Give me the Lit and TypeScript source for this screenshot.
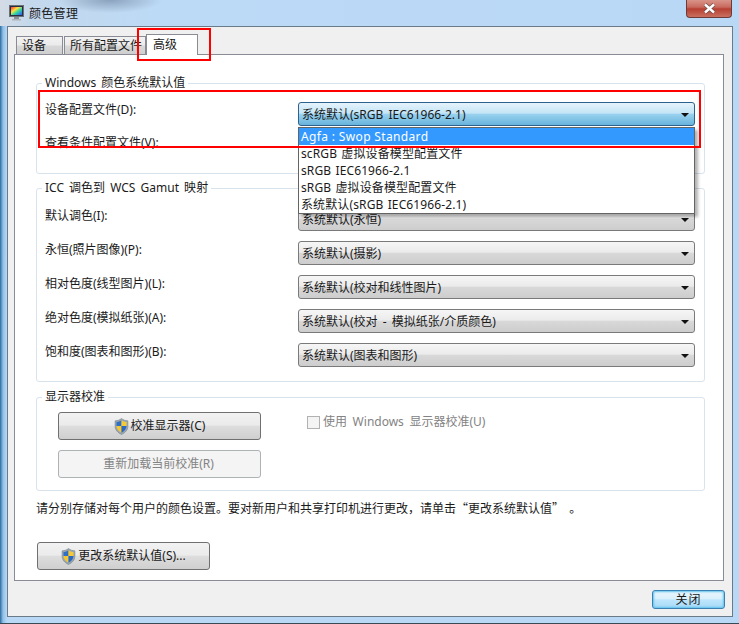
import { LitElement, html, css } from "lit";
import { customElement } from "lit/decorators.js";

const shield = html`<svg class="shield" width="15" height="17" viewBox="0 0 14 16">
  <path d="M7 .5C5.400 1.800 3.400 2.600 1 2.700v5.100c0 3.400 2.400 6 6 7.700 3.600-1.700 6-4.300 6-7.700V2.700C10.600 2.600 8.600 1.800 7 .5z" fill="#9aa6b0" stroke="#7d8791" stroke-width=".6"/>
  <path d="M7 2v5.500H2.300V3.800C4 3.700 5.600 3 7 2z" fill="#2f6fc4"/>
  <path d="M7 2v5.500h4.700V3.800C10 3.700 8.400 3 7 2z" fill="#f7c934"/>
  <path d="M7 7.500v6.400C4.500 12.600 2.500 10.600 2.300 7.500H7z" fill="#f5c730"/>
  <path d="M7 7.500v6.400c2.500-1.300 4.500-3.300 4.700-6.400H7z" fill="#2c68bd"/>
</svg>`;

const rows2 = [
  ["默认调色(I):", "系统默认(永恒)"],
  ["永恒(照片图像)(P):", "系统默认(摄影)"],
  ["相对色度(线型图片)(L):", "系统默认(校对和线性图片)"],
  ["绝对色度(模拟纸张)(A):", "系统默认(校对 - 模拟纸张/介质颜色)"],
  ["饱和度(图表和图形)(B):", "系统默认(图表和图形)"],
];

@customElement("app-root")
export class AppRoot extends LitElement {
  static styles = css`
    :host {
      display: block;
      width: 739px;
      height: 624px;
      position: relative;
      overflow: hidden;
      font: 12px/16px "Noto Sans", "Noto Sans CJK SC", sans-serif;
      color: #1a1a1a;
    }
    .frame {
      box-sizing: border-box;
      width: 739px;
      height: 624px;
      padding: 0 6px 6px 7px;
      display: flex;
      flex-direction: column;
      background: linear-gradient(90deg, #2c6a9c 0, #8fc0e8 3px, #b9d8f6 7px, #b9d8f6 100%);
      border-bottom: 1px solid #3a4a55;
    }
    .title {
      height: 26px;
      flex: none;
      display: flex;
      align-items: center;
      gap: 5px;
      background:
        radial-gradient(ellipse 52px 13px at 110px 0, rgba(105,125,155,.6), rgba(105,125,155,0)),
        linear-gradient(90deg, #d4dce6 0, #c4d8ec 30px, #bcdaf6 160px, #b9d8f6 100%);
      margin: 0 -6px 0 -7px;
      padding: 0 6px 0 9px;
      position: relative;
      letter-spacing: .3px;
    }
    .title span { margin-top: 2px; }
    .close {
      position: absolute;
      right: 7px;
      top: -1px;
      width: 46px;
      height: 19px;
      box-sizing: border-box;
      border: 1px solid #6e3a38;
      border-top: none;
      border-radius: 0 0 4px 4px;
      background: linear-gradient(#dc9a90 0, #c96a5e 45%, #b73f32 55%, #c9705f 100%);
      display: flex;
      align-items: center;
      justify-content: center;
    }
    .client {
      flex: 1;
      border: 1px solid #6a7a88;
      background: #f0f0f0;
      display: flex;
      flex-direction: column;
      padding: 7px 6px 0 6px;
      min-height: 0;
    }
    .tabs {
      display: flex;
      align-items: flex-end;
      height: 20px;
      padding-left: 2px;
      flex: none;
      position: relative;
      z-index: 1;
    }
    .tab {
      box-sizing: border-box;
      height: 18px;
      border: 1px solid #898c95;
      border-bottom: none;
      background: linear-gradient(#f2f2f2 0, #ebebeb 45%, #d8d8d8 55%, #cfcfcf 100%);
      padding-left: 5px;
      margin-right: 1px;
      white-space: nowrap;
      line-height: 17px;
    }
    .tab.a { width: 47px; }
    .tab.b { width: 82px; margin-right: 0; overflow: hidden; }
    .tab.on {
      width: 52px;
      height: 21px;
      margin: 0 0 -1px 0;
      background: #fff;
      padding-left: 6px;
      line-height: 20px;
    }
    .panel {
      flex: none;
      box-sizing: border-box;
      height: 527px;
      margin-right: 2px;
      background: #fff;
      border: 1px solid #898c95;
      padding: 21px 18px 0 21px;
      display: flex;
      flex-direction: column;
    }
    fieldset {
      margin: 0;
      padding: 0;
      border: 1px solid #d9e3ec;
      border-radius: 3px;
      min-width: 0;
      display: block;
      box-sizing: border-box;
      position: relative;
      flex: none;
    }
    legend {
      margin-left: 5px;
      padding: 0 3px 0 3px;
      line-height: 14px;
      height: 14px;
      word-spacing: 2px;
    }
    .g1 { height: 98px; }
    .g2 { height: 201px; margin-top: 7px; }
    .g3 { height: 101px; margin-top: 8px; }
    .rows {
      display: grid;
      grid-template-columns: 1fr 397px;
      padding: 12px 9px 0 8px;
      row-gap: 10px;
      grid-auto-rows: 24px;
    }
    .g1 .rows { row-gap: 9px; }
    .lbl { line-height: 14px; margin-top: 1px; white-space: nowrap; }
    .g2 .lbl { margin-top: 2px; }
    .combo {
      box-sizing: border-box;
      height: 24px;
      border: 1px solid #7a7a7a;
      border-radius: 3px;
      background: linear-gradient(#f6f6f6 0, #ebebeb 46%, #d8d8d8 52%, #cdcdcd 100%);
      display: flex;
      align-items: center;
      padding: 1px 5px 0 3px;
      white-space: nowrap;
      word-spacing: 2px;
    }
    .combo.focus {
      border-color: #2c628b;
      background: linear-gradient(#e5f4fc 0, #c4e5f6 46%, #98d1ef 52%, #68b3db 100%);
    }
    .combo span { flex: 1; }
    .arrow {
      width: 0;
      height: 0;
      border: 4px solid transparent;
      border-top: 4px solid #111;
      border-bottom: none;
    }
    .list {
      position: absolute;
      left: 261px;
      top: 37px;
      width: 397px;
      height: 87px;
      box-sizing: border-box;
      background: #fff;
      border: 1px solid #646464;
      box-shadow: 3px 3px 3px rgba(0,0,0,.3);
      z-index: 2;
    }
    .item {
      height: 17px;
      line-height: 18px;
      padding-left: 2px;
      white-space: nowrap;
      letter-spacing: .12px;
      word-spacing: 1px;
    }
    .item.sel { background: #3399ff; color: #fff; letter-spacing: .35px; word-spacing: 0; }
    .calib {
      display: grid;
      grid-template-columns: 203px auto;
      column-gap: 46px;
      row-gap: 10px;
      padding: 8px 0 0 21px;
      justify-content: start;
    }
    .btn {
      box-sizing: border-box;
      height: 28px;
      border: 1px solid #707070;
      border-radius: 3px;
      background: linear-gradient(#f2f2f2 0, #ebebeb 46%, #dddddd 52%, #cfcfcf 100%);
      display: flex;
      align-items: center;
      justify-content: center;
      gap: 2px;
      white-space: nowrap;
    }
    .btn.off {
      border-color: #adb2b5;
      background: #f4f4f4;
      color: #838383;
      padding-right: 2px;
    }
    .check {
      display: flex;
      align-items: center;
      height: 18px;
      gap: 3px;
      margin-top: 1px;
      color: #838383;
      word-spacing: 2.5px;
    }
    .box {
      width: 11px;
      height: 11px;
      border: 1px solid #b1b1b1;
      background: #f4f4f4;
      margin-top: 1px;
    }
    .note { margin: 9px 0 0 0; height: 18px; line-height: 16px; white-space: nowrap; flex: none; word-spacing: 2px; }
    .q { font-family: "Noto Sans CJK SC", sans-serif; }
    .change { width: 173px; margin: 24px 0 0 1px; flex: none; }
    .foot {
      flex: 1;
      display: flex;
      justify-content: flex-end;
      align-items: flex-start;
      padding: 9px 1px 0 0;
    }
    .close-btn {
      box-sizing: border-box;
      width: 73px;
      height: 19px;
      border: 1px solid #3c7fb1;
      border-radius: 3px;
      background: linear-gradient(#eaf6fd 0, #d9f0fc 46%, #bee6fd 52%, #a7d9f5 100%);
      box-shadow: inset 0 0 2px 1px #5fc4ee;
      display: flex;
      align-items: center;
      justify-content: center;
      letter-spacing: 1px;
    }
    .mark {
      position: absolute;
      box-sizing: border-box;
      border: 2px solid #f00;
      z-index: 3;
      pointer-events: none;
    }
    .mark.m1 { left: 137px; top: 28px; width: 74px; height: 33px; }
    .mark.m2 { left: 38px; top: 90px; width: 663px; height: 58px; }
  `;

  render() {
    return html`
      <div class="frame">
        <div class="title">
          <svg width="15" height="16" viewBox="0 0 15 16">
            <rect x=".5" y=".5" width="14" height="11" fill="#2a2f45" stroke="#6b7078"/>
            <defs><linearGradient id="rb" x1="0" y1="0" x2="1" y2="1">
              <stop offset="0" stop-color="#ff3030"/><stop offset=".35" stop-color="#ffe040"/>
              <stop offset=".6" stop-color="#30d8a0"/><stop offset="1" stop-color="#3050ff"/>
            </linearGradient></defs>
            <rect x="2" y="2" width="11" height="8" fill="url(#rb)"/>
            <rect x="5" y="12" width="5" height="2" fill="#8a8f96"/>
            <rect x="3" y="14" width="9" height="1.500" fill="#b0b4ba"/>
          </svg>
          <span>颜色管理</span>
          <div class="close">
            <svg width="13" height="11" viewBox="0 0 13 11">
              <path d="M2 1.500l9 8M11 1.500l-9 8" stroke="#6b4a48" stroke-width="3.800" fill="none"/>
              <path d="M2 1.500l9 8M11 1.500l-9 8" stroke="#fff" stroke-width="2.400" fill="none"/>
            </svg>
          </div>
        </div>
        <div class="client">
          <div class="tabs">
            <div class="tab a">设备</div>
            <div class="tab b">所有配置文件</div>
            <div class="tab on">高级</div>
          </div>
          <div class="panel">
            <fieldset class="g1">
              <legend>Windows 颜色系统默认值</legend>
              <div class="rows">
                <div class="lbl">设备配置文件(D):</div>
                <div class="combo focus"><span>系统默认(sRGB IEC61966-2.1)</span><i class="arrow"></i></div>
                <div class="lbl">查看条件配置文件(V):</div>
                <div class="combo"></div>
              </div>
              <div class="list">
                <div class="item sel">Agfa : Swop Standard</div>
                <div class="item">scRGB 虚拟设备模型配置文件</div>
                <div class="item">sRGB IEC61966-2.1</div>
                <div class="item">sRGB 虚拟设备模型配置文件</div>
                <div class="item">系统默认(sRGB IEC61966-2.1)</div>
              </div>
            </fieldset>
            <fieldset class="g2">
              <legend>ICC 调色到 WCS Gamut 映射</legend>
              <div class="rows">
                ${rows2.map(([l, v]) => html`
                  <div class="lbl">${l}</div>
                  <div class="combo"><span>${v}</span><i class="arrow"></i></div>
                `)}
              </div>
            </fieldset>
            <fieldset class="g3">
              <legend>显示器校准</legend>
              <div class="calib">
                <div class="btn">${shield}<span>校准显示器(C)</span></div>
                <div class="check"><i class="box"></i><span>使用 Windows 显示器校准(U)</span></div>
                <div class="btn off">重新加载当前校准(R)</div>
              </div>
            </fieldset>
            <p class="note">请分别存储对每个用户的颜色设置。要对新用户和共享打印机进行更改，请单击<span class="q">“</span>更改系统默认值<span class="q">”</span> 。</p>
            <div class="btn change">${shield}<span>更改系统默认值(S)...</span></div>
          </div>
          <div class="foot"><div class="close-btn">关闭</div></div>
        </div>
      </div>
      <div class="mark m1"></div>
      <div class="mark m2"></div>
    `;
  }
}
